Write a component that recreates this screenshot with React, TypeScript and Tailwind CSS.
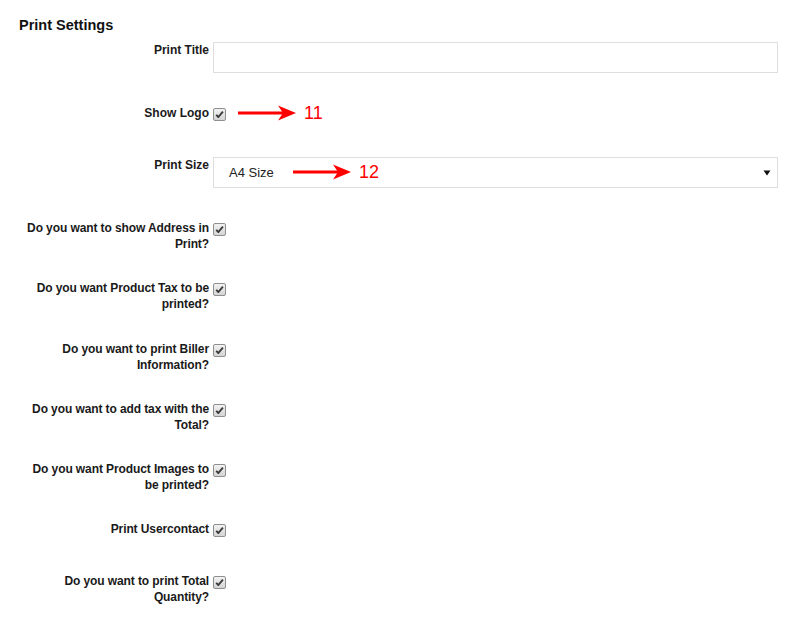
import React from 'react';

const FONT = "font-['Liberation_Sans',Arial,Helvetica,sans-serif]";

function CheckBox() {
  return (
    <span className="mt-[3px] inline-flex h-[13px] w-[13px] shrink-0 items-center justify-center rounded-[2px] border border-[#8f8f8f] bg-gradient-to-b from-[#f2f2f2] to-[#d4d4d4]">
      <svg width="9" height="9" viewBox="0 0 9 9">
        <path d="M1.2 4.8 L3.4 7 L7.9 1.6" fill="none" stroke="#3a3a3a" strokeWidth="1.9" strokeLinejoin="round" />
      </svg>
    </span>
  );
}

function Arrow({ x, y, label }: { x: number; y: number; label: string }) {
  // annotation overlay: red arrow + number
  return (
    <div className="absolute flex items-center" style={{ left: x, top: y - 10 }}>
      <svg width="60" height="20" viewBox="0 0 60 20">
        <rect x="0" y="8.5" width="46" height="3" fill="#f00" />
        <path d="M58 10 L40 2.5 L45 10 L40 17.5 Z" fill="#f00" />
      </svg>
      <span className="ml-[6px] text-[18px] leading-[20px] text-[#f00]">{label}</span>
    </div>
  );
}

const rows: { label: React.ReactNode; h: string }[] = [
  { label: <>Do you want to show Address in<br />Print?</>, h: 'h-[60px]' },
  { label: <>Do you want Product Tax to be<br />printed?</>, h: 'h-[61px]' },
  { label: <>Do you want to print Biller<br />Information?</>, h: 'h-[60px]' },
  { label: <>Do you want to add tax with the<br />Total?</>, h: 'h-[60px]' },
  { label: <>Do you want Product Images to<br />be printed?</>, h: 'h-[60px]' },
  { label: <>Print Usercontact</>, h: 'h-[52px]' },
  { label: <>Do you want to print Total<br />Quantity?</>, h: 'h-[60px]' },
];

export default function App() {
  return (
    <div className={`relative h-[635px] w-[800px] overflow-hidden bg-white text-[#1a1a1a] ${FONT}`}>
      <div className="pl-[19px] pt-[15px] text-[14.5px] font-bold leading-[20px] text-[#111]">Print Settings</div>

      <div className="mt-[6px]">
        <div className="flex h-[64px]">
          <label className="w-[213px] shrink-0 pr-[4px] pt-[1px] text-right text-[12px] font-bold leading-[16px]">Print Title</label>
          <div className="mt-[1px] h-[31px] w-[565px] border border-[#dedede] bg-white" />
        </div>

        <div className="flex h-[51px]">
          <label className="w-[213px] shrink-0 pr-[4px] text-right text-[12px] font-bold leading-[16px]">Show Logo</label>
          <CheckBox />
        </div>

        <div className="flex h-[64px]">
          <label className="w-[213px] shrink-0 pr-[4px] pt-[1px] text-right text-[12px] font-bold leading-[16px]">Print Size</label>
          <div className="mt-[1px] flex h-[31px] w-[565px] items-center justify-between border border-[#dedede] bg-white pl-[15px] pr-[6px] text-[13px] text-[#222]">
            <span>A4 Size</span>
            <svg width="8" height="6" viewBox="0 0 8 6">
              <path d="M0.5 0.5 L7.5 0.5 L4 5.5 Z" fill="#111" />
            </svg>
          </div>
        </div>

        {rows.map((r, i) => (
          <div key={i} className={`flex ${r.h}`}>
            <label className="w-[213px] shrink-0 pr-[4px] text-right text-[12px] font-bold leading-[16px] tracking-[-0.1px]">{r.label}</label>
            <CheckBox />
          </div>
        ))}
      </div>

      <Arrow x={238} y={113} label="11" />
      <Arrow x={293} y={172} label="12" />
    </div>
  );
}
